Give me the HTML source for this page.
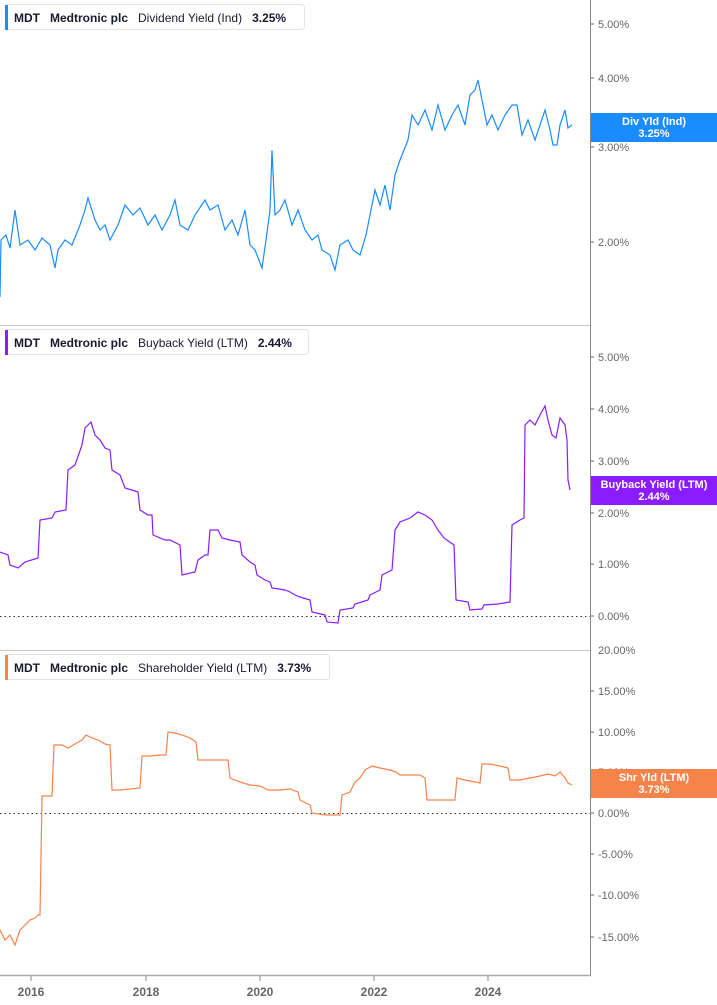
<!DOCTYPE html>
<html><head><meta charset="utf-8"><style>
html,body{margin:0;padding:0;background:#fff;width:717px;height:1005px;overflow:hidden}
svg{display:block;font-family:"Liberation Sans",sans-serif}
</style></head><body>
<svg width="717" height="1005" viewBox="0 0 717 1005" xmlns="http://www.w3.org/2000/svg">
<line x1="0" y1="325.5" x2="590" y2="325.5" stroke="#c8c8c8"/>
<line x1="0" y1="650.5" x2="590" y2="650.5" stroke="#c8c8c8"/>
<line x1="590.5" y1="0" x2="590.5" y2="976" stroke="#888"/>
<line x1="0" y1="975.5" x2="591" y2="975.5" stroke="#aaa" stroke-width="1.5"/>
<g stroke="#888"><line x1="31" y1="976" x2="31" y2="981"/><line x1="146" y1="976" x2="146" y2="981"/><line x1="260" y1="976" x2="260" y2="981"/><line x1="374" y1="976" x2="374" y2="981"/><line x1="488" y1="976" x2="488" y2="981"/></g>
<g font-size="12" font-weight="bold" fill="#666" text-anchor="middle"><text x="31" y="996">2016</text><text x="146" y="996">2018</text><text x="260" y="996">2020</text><text x="374" y="996">2022</text><text x="488" y="996">2024</text></g>
<g stroke="#666"><line x1="591" y1="24" x2="594" y2="24"/><line x1="591" y1="78" x2="594" y2="78"/><line x1="591" y1="147" x2="594" y2="147"/><line x1="591" y1="242" x2="594" y2="242"/>
<line x1="591" y1="357" x2="594" y2="357"/><line x1="591" y1="409" x2="594" y2="409"/><line x1="591" y1="461" x2="594" y2="461"/><line x1="591" y1="513" x2="594" y2="513"/><line x1="591" y1="564" x2="594" y2="564"/><line x1="591" y1="616" x2="594" y2="616"/>
<line x1="591" y1="691" x2="594" y2="691"/><line x1="591" y1="732" x2="594" y2="732"/><line x1="591" y1="813" x2="594" y2="813"/><line x1="591" y1="854" x2="594" y2="854"/><line x1="591" y1="895" x2="594" y2="895"/><line x1="591" y1="937" x2="594" y2="937"/></g>
<g font-size="11" fill="#666">
<text x="598" y="28">5.00%</text><text x="598" y="82">4.00%</text><text x="598" y="151">3.00%</text><text x="598" y="246">2.00%</text>
<text x="598" y="361">5.00%</text><text x="598" y="413">4.00%</text><text x="598" y="465">3.00%</text><text x="598" y="517">2.00%</text><text x="598" y="568">1.00%</text><text x="598" y="620">0.00%</text>
<text x="598" y="654">20.00%</text><text x="598" y="695">15.00%</text><text x="598" y="736">10.00%</text><text x="598" y="776">5.00%</text><text x="598" y="817">0.00%</text><text x="598" y="858">-5.00%</text><text x="598" y="899">-10.00%</text><text x="598" y="941">-15.00%</text>
</g>
<line x1="0" y1="616.5" x2="590" y2="616.5" stroke="#333" stroke-dasharray="1.5 3"/>
<line x1="0" y1="813.5" x2="590" y2="813.5" stroke="#333" stroke-dasharray="1.5 3"/>
<polyline fill="none" stroke="#1a8cff" stroke-width="1.2" points="0,297 1,240 6,235 10,248 15,210 20,245 28,240 35,250 42,238 50,245 55,268 58,250 65,240 72,245 80,225 85,210 88,198 95,220 100,230 105,225 110,240 118,225 125,205 133,215 140,208 148,225 155,215 162,230 170,215 175,200 180,225 188,230 195,215 205,200 210,210 218,205 225,230 232,220 238,235 245,210 250,245 255,250 262,268 266,240 270,210 272,150 275,215 280,210 285,200 292,225 298,210 305,230 312,240 318,235 322,250 330,255 335,270 340,245 348,240 353,250 360,255 366,235 370,215 375,190 380,205 385,185 390,210 395,175 400,160 404,150 408,140 412,115 418,125 425,110 432,130 438,105 445,130 452,115 458,105 465,125 470,95 475,90 478,80 482,100 487,125 492,115 498,130 505,115 512,105 517,105 522,135 528,120 535,140 540,125 545,110 550,130 553,145 557,145 560,125 565,110 568,128 572,125"/>
<polyline fill="none" stroke="#8a1cff" stroke-width="1.2" points="0,552 8,555 10,565 18,568 25,562 38,558 40,520 52,518 55,512 66,510 68,470 75,465 82,445 85,428 88,425 91,422 95,435 100,440 105,448 110,450 112,470 120,475 125,488 132,490 138,492 140,510 148,515 152,515 153,535 165,540 170,540 180,545 182,575 195,572 198,560 205,555 208,555 210,530 218,530 222,538 230,540 240,542 242,555 250,562 255,565 257,575 265,580 270,582 272,588 285,590 290,592 295,595 300,597 310,600 312,612 325,615 327,622 338,623 340,610 353,608 355,604 368,600 370,595 380,590 382,575 392,570 395,530 400,522 410,518 418,512 425,515 432,520 438,530 444,538 454,545 456,600 468,602 470,610 482,609 484,605 498,604 510,602 512,525 520,520 524,518 525,425 530,420 535,425 540,415 545,406 548,420 552,435 556,438 560,418 565,425 567,440 568,480 570,490"/>
<polyline fill="none" stroke="#f5834a" stroke-width="1.2" points="0,930 5,940 10,935 15,945 20,930 25,925 30,920 35,918 38,915 40,915 42,796 52,796 54,745 62,745 68,748 75,744 82,740 86,735 92,738 98,740 105,744 110,745 112,790 120,790 130,789 140,788 142,756 150,756 160,755 166,755 168,732 175,733 182,735 190,738 196,742 198,760 210,760 220,760 228,760 230,778 240,782 250,785 260,786 268,790 270,790 280,790 290,789 298,792 300,800 310,805 312,813 325,815 340,815 342,795 350,792 355,782 360,778 365,770 372,766 380,768 390,770 396,772 400,775 410,775 420,775 425,778 427,800 440,800 455,800 457,778 465,780 475,782 480,783 482,764 490,764 500,766 508,768 510,780 520,780 530,778 540,776 548,774 555,776 560,772 565,778 568,783 572,785"/>
<g font-size="12">
<rect x="5.5" y="4.5" width="299" height="25" rx="3" fill="#fff" stroke="#e4e4e4"/>
<rect x="5" y="5" width="3" height="25" fill="#1a8cff"/>
<text x="14" y="22"><tspan font-weight="bold" fill="#1a1a2e">MDT</tspan><tspan dx="10" font-weight="bold" fill="#1a1a2e">Medtronic plc</tspan><tspan dx="10" fill="#1a1a2e">Dividend Yield (Ind)</tspan><tspan dx="10" font-weight="bold" fill="#1a1a2e">3.25%</tspan></text>
<rect x="5.5" y="329.5" width="303" height="25" rx="3" fill="#fff" stroke="#e4e4e4"/>
<rect x="5" y="330" width="3" height="25" fill="#8a1cff"/>
<text x="14" y="347"><tspan font-weight="bold" fill="#1a1a2e">MDT</tspan><tspan dx="10" font-weight="bold" fill="#1a1a2e">Medtronic plc</tspan><tspan dx="10" fill="#1a1a2e">Buyback Yield (LTM)</tspan><tspan dx="10" font-weight="bold" fill="#1a1a2e">2.44%</tspan></text>
<rect x="5.5" y="654.5" width="324" height="25" rx="3" fill="#fff" stroke="#e4e4e4"/>
<rect x="5" y="655" width="3" height="25" fill="#f5834a"/>
<text x="14" y="672"><tspan font-weight="bold" fill="#1a1a2e">MDT</tspan><tspan dx="10" font-weight="bold" fill="#1a1a2e">Medtronic plc</tspan><tspan dx="10" fill="#1a1a2e">Shareholder Yield (LTM)</tspan><tspan dx="10" font-weight="bold" fill="#1a1a2e">3.73%</tspan></text>
</g>
<g font-size="11" font-weight="bold" fill="#fff" text-anchor="middle">
<rect x="591" y="113" width="126" height="29" fill="#1a8cff"/><text x="654" y="125" fill="#fff">Div Yld (Ind)</text><text x="654" y="137" fill="#fff">3.25%</text>
<rect x="591" y="476" width="126" height="29" fill="#8a1cff"/><text x="654" y="488" fill="#fff">Buyback Yield (LTM)</text><text x="654" y="500" fill="#fff">2.44%</text>
<rect x="591" y="769" width="126" height="29" fill="#f5834a"/><text x="654" y="781" fill="#fff">Shr Yld (LTM)</text><text x="654" y="793" fill="#fff">3.73%</text>
</g>
</svg>
</body></html>
